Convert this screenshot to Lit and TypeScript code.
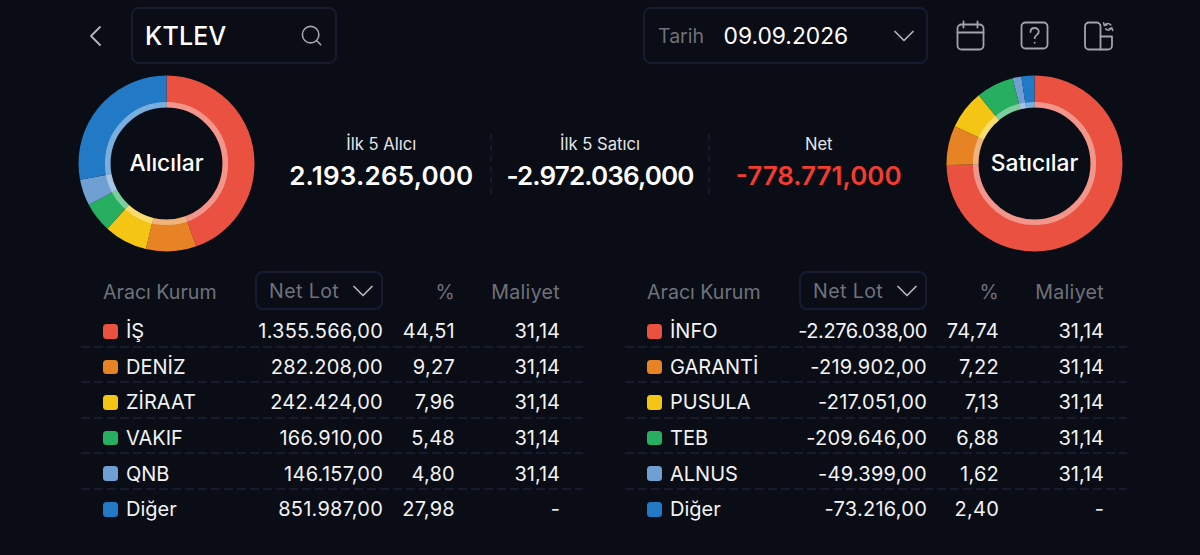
import { LitElement, html, css, svg } from "lit";
import { customElement } from "lit/decorators.js";

const COLORS = ["#ea5140", "#e78324", "#f4c514", "#27ae60", "#6f9fd3", "#2279c6"];

interface Row {
  name: string;
  lot: string;
  pct: string;
  cost: string;
}

const BUYERS: Row[] = [
  { name: "İŞ", lot: "1.355.566,00", pct: "44,51", cost: "31,14" },
  { name: "DENİZ", lot: "282.208,00", pct: "9,27", cost: "31,14" },
  { name: "ZİRAAT", lot: "242.424,00", pct: "7,96", cost: "31,14" },
  { name: "VAKIF", lot: "166.910,00", pct: "5,48", cost: "31,14" },
  { name: "QNB", lot: "146.157,00", pct: "4,80", cost: "31,14" },
  { name: "Diğer", lot: "851.987,00", pct: "27,98", cost: "-" },
];

const SELLERS: Row[] = [
  { name: "İNFO", lot: "-2.276.038,00", pct: "74,74", cost: "31,14" },
  { name: "GARANTİ", lot: "-219.902,00", pct: "7,22", cost: "31,14" },
  { name: "PUSULA", lot: "-217.051,00", pct: "7,13", cost: "31,14" },
  { name: "TEB", lot: "-209.646,00", pct: "6,88", cost: "31,14" },
  { name: "ALNUS", lot: "-49.399,00", pct: "1,62", cost: "31,14" },
  { name: "Diğer", lot: "-73.216,00", pct: "2,40", cost: "-" },
];

const chevron = (w: number, h: number) => html`
  <svg width=${w} height=${h} viewBox="0 0 20 12" fill="none" stroke="currentColor" stroke-width="1.7" stroke-linecap="round" stroke-linejoin="round">
    <path d="M1 1.5 L10 10.5 L19 1.5" />
  </svg>
`;

@customElement("app-root")
export class AppRoot extends LitElement {
  static styles = css`
    :host {
      display: block;
      width: 1200px;
      height: 555px;
      overflow: hidden;
      background: #0a0d15;
      color: #fff;
      font-family: Inter, "Noto Sans", sans-serif;
    }
    .top {
      display: flex;
      align-items: center;
      padding: 7px 0 0 88px;
      height: 57px;
    }
    .back {
      display: flex;
      width: 43px;
      color: #b4b6bb;
    }
    .box {
      box-sizing: border-box;
      height: 57px;
      display: flex;
      align-items: center;
      border: 2px solid #161b30;
      border-radius: 8px;
    }
    .search {
      width: 206px;
      padding: 0 13px 0 12px;
      justify-content: space-between;
      font-size: 25px;
      font-weight: 500;
      letter-spacing: 0.2px;
    }
    .search svg {
      color: #a5a7ac;
    }
    .date {
      width: 285px;
      margin-left: 306px;
      padding: 0 12px 0 13px;
    }
    .date .tarih {
      font-size: 19.5px;
      color: #6f727a;
      width: 65.5px;
    }
    .date .day {
      font-size: 22.8px;
      flex: 1;
    }
    .date svg {
      color: #b4b6bb;
    }
    .icons {
      display: flex;
      gap: 32px;
      margin-left: 27px;
      color: #a2a4aa;
    }
    .summary {
      display: flex;
      align-items: center;
      margin: 11px 0 0 78px;
      height: 177px;
    }
    .donut {
      position: relative;
      width: 177px;
      height: 177px;
      flex: none;
    }
    .donut svg {
      display: block;
      transform: rotate(-90deg);
    }
    .donut .title {
      position: absolute;
      inset: 0 0 2px;
      display: flex;
      align-items: center;
      justify-content: center;
      font-size: 22.8px;
      font-weight: 500;
    }
    .stats {
      display: flex;
      width: 657px;
      margin: 0 19px 0 15px;
    }
    .stat {
      box-sizing: border-box;
      flex: 1;
      display: flex;
      flex-direction: column;
      align-items: center;
      gap: 6px;
      height: 60px;
      border-left: 2px dashed #141a2c;
    }
    .stat:first-child {
      border-left: none;
      padding-left: 3px;
    }
    .stat .label {
      font-size: 16.6px;
      color: #e4e5e7;
      line-height: 20px;
    }
    .stat .value {
      font-size: 26px;
      font-weight: 600;
      line-height: 32px;
    }
    .stat .value.wide {
      letter-spacing: 0.2px;
    }
    .stat .value.tight {
      letter-spacing: -0.85px;
    }
    .stat .value.neg {
      color: #f23c30;
    }
    .tables {
      display: flex;
      gap: 42px;
      margin: 19px 0 0 81px;
    }
    .table {
      width: 502px;
    }
    .head,
    .row {
      display: grid;
      grid-template-columns: 152px 128px 72px 105px;
      align-items: center;
      padding: 0 22px;
    }
    .head {
      height: 39px;
      margin-bottom: 2px;
      font-size: 19.6px;
      color: #6f727a;
    }
    .head .first,
    .head .r {
      margin-top: 3px;
    }
    .head .r {
      text-align: right;
      letter-spacing: 0.3px;
    }
    .pick {
      box-sizing: border-box;
      height: 39px;
      display: flex;
      align-items: center;
      justify-content: space-between;
      padding: 0 8px 0 12px;
      border: 2px solid #161b30;
      border-radius: 8px;
      letter-spacing: 0.4px;
    }
    .pick svg {
      color: #b4b6bb;
    }
    .row {
      box-sizing: border-box;
      height: 35.6px;
      padding-top: 5px;
      padding-bottom: 2px;
      font-size: 20px;
      color: #f2f3f4;
      background: linear-gradient(to right, #161b30 9px, transparent 9px) left bottom / 13px 2px repeat-x;
    }
    .row:last-child {
      background: none;
    }
    .name {
      display: flex;
      align-items: center;
      gap: 8.5px;
    }
    .swatch {
      width: 14.5px;
      height: 14.5px;
      border-radius: 3.5px;
    }
    .num {
      display: flex;
      justify-content: flex-end;
      white-space: nowrap;
    }
    .num.lot,
    .num.pct {
      letter-spacing: 0.25px;
    }
    .num.lot.long {
      letter-spacing: -0.4px;
    }
  `;

  private donut(rows: Row[], title: string) {
    // pathLength=100 so the dash values are the percentages themselves
    let offset = 0;
    const slices = rows.map((r, i) => {
      const v = parseFloat(r.pct.replace(",", "."));
      const s = svg`<circle cx="88.5" cy="88.5" r="72" fill="none" stroke=${COLORS[i]} stroke-width="32"
        pathLength="100" stroke-dasharray="${v} ${100 - v}" stroke-dashoffset=${-offset} />`;
      offset += v;
      return s;
    });
    return html`
      <div class="donut">
        <svg width="177" height="177" viewBox="0 0 177 177">
          ${slices}
          <circle cx="88.5" cy="88.5" r="58.8" fill="none" stroke="#fff" stroke-opacity="0.4" stroke-width="5.6" />
        </svg>
        <div class="title">${title}</div>
      </div>
    `;
  }

  private table(rows: Row[]) {
    return html`
      <div class="table">
        <div class="head">
          <div class="first">Aracı Kurum</div>
          <div class="pick">Net Lot ${chevron(20, 12)}</div>
          <div class="r">%</div>
          <div class="r">Maliyet</div>
        </div>
        ${rows.map(
          (r, i) => html`
            <div class="row">
              <div class="name">
                <span class="swatch" style="background:${COLORS[i]}"></span>${r.name}
              </div>
              <div class="num lot ${r.lot.length > 12 ? "long" : ""}">${r.lot}</div>
              <div class="num pct">${r.pct}</div>
              <div class="num">${r.cost}</div>
            </div>
          `
        )}
      </div>
    `;
  }

  render() {
    return html`
      <div class="top">
        <div class="back">
          <svg width="14" height="22" viewBox="0 0 14 22" fill="none" stroke="currentColor" stroke-width="1.8" stroke-linecap="round" stroke-linejoin="round">
            <path d="M12 2 L3 11 L12 20" />
          </svg>
        </div>
        <div class="box search">
          KTLEV
          <svg width="21" height="21" viewBox="0 0 24 24" fill="none" stroke="currentColor" stroke-width="1.8" stroke-linecap="round">
            <circle cx="11" cy="11" r="9.4" />
            <path d="M18 18 L22.6 22.6" />
          </svg>
        </div>
        <div class="box date">
          <span class="tarih">Tarih</span>
          <span class="day">09.09.2026</span>
          ${chevron(20, 12)}
        </div>
        <div class="icons">
          <svg width="32" height="32" viewBox="0 0 32 32" fill="none" stroke="currentColor" stroke-width="1.8" stroke-linecap="round" stroke-linejoin="round">
            <rect x="2.5" y="4.5" width="26" height="25" rx="4" />
            <path d="M2.5 12.5 H28.5 M8.5 1.5 V7.5 M22.5 1.5 V7.5" />
          </svg>
          <svg width="32" height="32" viewBox="0 0 32 32" fill="none" stroke="currentColor" stroke-width="1.8" stroke-linecap="round" stroke-linejoin="round">
            <rect x="2.5" y="2.5" width="26" height="26" rx="4" />
            <path d="M11.5 12 C11.5 9.4 13.4 8 15.6 8 C18 8 19.8 9.6 19.8 11.8 C19.8 14.8 15.7 15 15.7 18.2" />
            <path d="M15.7 22.6 V22.8" />
          </svg>
          <svg width="32" height="32" viewBox="0 0 32 32" fill="none" stroke="currentColor" stroke-width="1.8" stroke-linecap="round" stroke-linejoin="round">
            <path d="M17.5 16.5 V6.5 A4 4 0 0 0 13.5 2.5 H6 A4 4 0 0 0 2 6.5 V25.5 A4 4 0 0 0 6 29.5 H25 A4 4 0 0 0 29 25.5 V16.5 H17.5" />
            <path d="M17.5 16.5 V29.5" />
            <path d="M21.4 5.4 C22.6 3 26 2.6 27.8 5 M28.8 8 C27.4 10.6 24.2 10.8 22.6 8.8" stroke-width="1.5" />
            <path d="M20.6 2.8 L21.4 5.6 L24 4.8 M29.8 10.6 L28.8 8 L26.2 8.8" stroke-width="1.5" />
          </svg>
        </div>
      </div>
      <div class="summary">
        ${this.donut(BUYERS, "Alıcılar")}
        <div class="stats">
          <div class="stat">
            <div class="label">İlk 5 Alıcı</div>
            <div class="value wide">2.193.265,000</div>
          </div>
          <div class="stat">
            <div class="label">İlk 5 Satıcı</div>
            <div class="value tight">-2.972.036,000</div>
          </div>
          <div class="stat">
            <div class="label">Net</div>
            <div class="value neg">-778.771,000</div>
          </div>
        </div>
        ${this.donut(SELLERS, "Satıcılar")}
      </div>
      <div class="tables">${this.table(BUYERS)} ${this.table(SELLERS)}</div>
    `;
  }
}
